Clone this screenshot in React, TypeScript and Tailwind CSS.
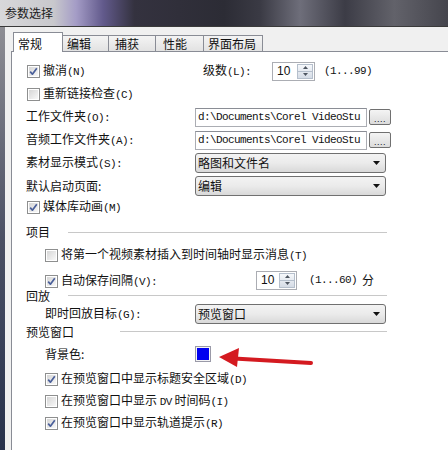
import React from "react";

const mono = "font-['Liberation_Mono',monospace] text-[11px] tracking-[-0.6px]";

function M({ c }: { c: string }) {
  return <span className={mono}>{c}</span>;
}

function Check({ checked }: { checked?: boolean }) {
  return (
    <span className="w-[13px] h-[13px] shrink-0 border border-[#8e8f8f] bg-white p-px flex">
      <span className="flex-1 flex items-center justify-center bg-gradient-to-br from-[#d6d6d6] to-[#f8f8f8]">
        {checked && (
          <svg width="9" height="9" viewBox="0 0 9 9">
            <path d="M1.2 4.6 L3.4 7.2 L7.8 1.2" stroke="#4a5f9a" strokeWidth="1.7" fill="none" strokeLinejoin="round" />
          </svg>
        )}
      </span>
    </span>
  );
}

function Spin({ wide }: { wide?: boolean }) {
  return (
    <div className={`flex h-[19px] border border-[#abadb3] bg-white ${wide ? "w-[43px]" : "w-[41px]"}`}>
      <div className="flex-1 pl-[4px] text-[12px] leading-[17px] font-['Liberation_Sans',sans-serif] text-[#111]">10</div>
      <div className="w-[16px] m-px flex flex-col border border-[#b5bfcc] bg-gradient-to-b from-[#f6f8fb] to-[#d5dce6]">
        <div className="flex-1 flex items-center justify-center">
          <svg width="5" height="3" viewBox="0 0 5 3"><path d="M0 3 L2.5 0 L5 3Z" fill="#4d5560" /></svg>
        </div>
        <div className="h-px bg-[#b5bfcc]" />
        <div className="flex-1 flex items-center justify-center">
          <svg width="5" height="3" viewBox="0 0 5 3"><path d="M0 0 L2.5 3 L5 0Z" fill="#4d5560" /></svg>
        </div>
      </div>
    </div>
  );
}

function Select({ text }: { text: string }) {
  return (
    <div className="w-[191px] h-[20px] rounded-[3px] border border-[#707070] bg-gradient-to-b from-[#f3f3f3] via-[#ebebeb] to-[#d9d9d9] flex items-center justify-between pl-[2px] pr-[5px]">
      <span className="text-[12px] leading-none">{text}</span>
      <svg width="7" height="4" viewBox="0 0 7 4"><path d="M0 0 L3.5 4 L7 0Z" fill="#111" /></svg>
    </div>
  );
}

function PathInput() {
  return (
    <div className="flex items-center">
      <div className="w-[172px] h-[19px] border border-[#abadb3] border-t-[#8a8d95] bg-white flex items-center pl-[2px] overflow-hidden whitespace-nowrap">
        <span className={mono}>d:\Documents\Corel VideoStu</span>
      </div>
      <div className="ml-[2px] w-[22px] h-[16px] rounded-[2px] border border-[#707070] bg-gradient-to-b from-[#f4f4f4] to-[#dcdcdc] flex items-center justify-center">
        <span className="text-[9px] leading-none tracking-[0.5px] font-['Liberation_Sans',sans-serif] mt-[4px]">....</span>
      </div>
    </div>
  );
}

const tabs = [
  { t: "常规", w: "w-[50px]", pl: "pl-[4px]", sel: true },
  { t: "编辑", w: "w-[47px]", pl: "pl-[4px]" },
  { t: "捕获", w: "w-[48px]", pl: "pl-[6px]" },
  { t: "性能", w: "w-[49px]", pl: "pl-[7px]" },
  { t: "界面布局", w: "w-[60px]", pl: "pl-[4px]" },
];

export default function App() {
  return (
    <div className="relative w-[448px] h-[450px] overflow-hidden bg-white text-[#111] font-['Noto_Sans_CJK_SC',sans-serif] text-[12px]">
      {/* title bar */}
      <div className="h-[27px] border-b border-[#3a3a3a] bg-[linear-gradient(90deg,#d8d8da_0%,#c8c8cc_12%,#a49cc6_17%,#625a8c_23%,#34323f_30%,#2c2c35_50%,#3a3a44_58%,#6e6e7a_67%,#3c3c46_77%,#62626a_88%,#45454d_100%)] flex items-center pl-[5px]">
        <span className="text-[12px] text-[#1c1c1c] leading-none">参数选择</span>
      </div>
      <div className="flex h-[423px]">
        <div className="w-[5px] bg-gradient-to-b from-[#8e8e94] via-[#4b5064] to-[#28324c]" />
        <div className="flex-1 bg-[#f0f0f0] pl-[6px] pt-[5px] flex flex-col">
          {/* tabs */}
          <div className="relative z-10 flex items-end h-[20px] ml-[2px]">
            {tabs.map((t, i) => (
              <div
                key={t.t}
                className={`${t.w} ${t.pl} ${i > 0 ? "-ml-px" : ""} ${
                  t.sel
                    ? "h-[20px] bg-white border-l border-t border-r border-[#898c95] pt-[2px]"
                    : "h-[16px] mb-px bg-gradient-to-b from-[#f4f4f4] to-[#e2e2e2] border-l border-t border-r border-[#898c95]"
                } flex items-center text-[12px] leading-none`}
              >
                {t.t}
              </div>
            ))}
          </div>
          {/* panel */}
          <div className="-mt-px flex-1 bg-white border-l border-t border-[#898c95] flex flex-col">
            {/* row1 */}
            <div className="mt-[9px] h-[20px] flex items-center">
              <div className="w-[191px] pl-[15px] flex items-center">
                <Check checked />
                <span className="ml-[3px]">撤消<M c="(N)" /></span>
              </div>
              <span className="w-[69px]">级数<M c="(L):" /></span>
              <Spin wide />
              <span className={`ml-[9px] ${mono}`}>(1...99)</span>
            </div>
            {/* row2 */}
            <div className="mt-[3px] h-[20px] flex items-center pl-[15px]">
              <Check />
              <span className="ml-[3px]">重新链接检查<M c="(C)" /></span>
            </div>
            <div className="mt-[3px] h-[20px] flex items-center pl-[14px]">
              <span className="w-[169px]">工作文件夹<M c="(O):" /></span>
              <PathInput />
            </div>
            <div className="mt-[3px] h-[20px] flex items-center pl-[14px]">
              <span className="w-[169px]">音频工作文件夹<M c="(A):" /></span>
              <PathInput />
            </div>
            <div className="mt-[3px] h-[20px] flex items-center pl-[14px]">
              <span className="w-[169px]">素材显示模式<M c="(S):" /></span>
              <Select text="略图和文件名" />
            </div>
            <div className="mt-[3px] h-[20px] flex items-center pl-[14px]">
              <span className="w-[169px]">默认启动页面:</span>
              <Select text="编辑" />
            </div>
            <div className="mt-px h-[20px] flex items-center pl-[15px]">
              <Check checked />
              <span className="ml-[3px]">媒体库动画<M c="(M)" /></span>
            </div>
            {/* 项目 */}
            <div className="mt-[5px] h-[20px] flex items-center pl-[14px]">
              <span className="w-[42px]">项目</span>
              <div className="w-[319px] h-px bg-[#c8c8c8]" />
            </div>
            <div className="mt-[3px] h-[20px] flex items-center pl-[33px]">
              <Check />
              <span className="ml-[3px]">将第一个视频素材插入到时间轴时显示消息<M c="(T)" /></span>
            </div>
            <div className="mt-[6px] h-[20px] flex items-center pl-[33px]">
              <Check checked />
              <span className="ml-[3px] w-[195px]">自动保存间隔<M c="(V):" /></span>
              <div className="-mt-[2px] flex items-center">
                <Spin />
                <span className={`ml-[12px] ${mono}`}>(1...60)</span>
                <span className="ml-[5px]">分</span>
              </div>
            </div>
            {/* 回放 */}
            <div className="-mt-[5px] h-[20px] flex items-center pl-[14px]">
              <span className="w-[42px]">回放</span>
              <div className="w-[319px] h-px bg-[#c8c8c8] -mt-[1px]" />
            </div>
            <div className="-mt-[2px] h-[20px] flex items-center pl-[33px]">
              <span className="w-[150px]">即时回放目标<M c="(G):" /></span>
              <Select text="预览窗口" />
            </div>
            {/* 预览窗口 */}
            <div className="-mt-[2px] h-[20px] flex items-center pl-[14px]">
              <span className="w-[94px]">预览窗口</span>
              <div className="w-[267px] h-px bg-[#c8c8c8] -mt-[1px]" />
            </div>
            <div className="mt-[2px] h-[20px] flex items-center pl-[33px]">
              <span className="w-[150px]">背景色:</span>
              <div className="w-[16px] h-[16px] border border-[#9a9aa8] bg-[#f4f4f4] p-px flex">
                <div className="flex-1 bg-[#0000f0]" />
              </div>
            </div>
            <div className="mt-[5px] h-[20px] flex items-center pl-[33px]">
              <Check checked />
              <span className="ml-[3px]">在预览窗口中显示标题安全区域<M c="(D)" /></span>
            </div>
            <div className="mt-[2px] h-[20px] flex items-center pl-[33px]">
              <Check />
              <span className="ml-[3px]">在预览窗口中显示 <M c="DV" /> 时间码<M c="(I)" /></span>
            </div>
            <div className="mt-[2px] h-[20px] flex items-center pl-[33px]">
              <Check checked />
              <span className="ml-[3px]">在预览窗口中显示轨道提示<M c="(R)" /></span>
            </div>
          </div>
        </div>
      </div>
      {/* red arrow overlay */}
      <svg className="absolute left-0 top-0 pointer-events-none" width="448" height="450" viewBox="0 0 448 450">
        <path d="M234 358.5 L311 363" stroke="#d41a20" strokeWidth="4" strokeLinecap="round" fill="none" />
        <path d="M219 357 L239 348 L237 367 Z" fill="#d41a20" />
      </svg>
    </div>
  );
}
